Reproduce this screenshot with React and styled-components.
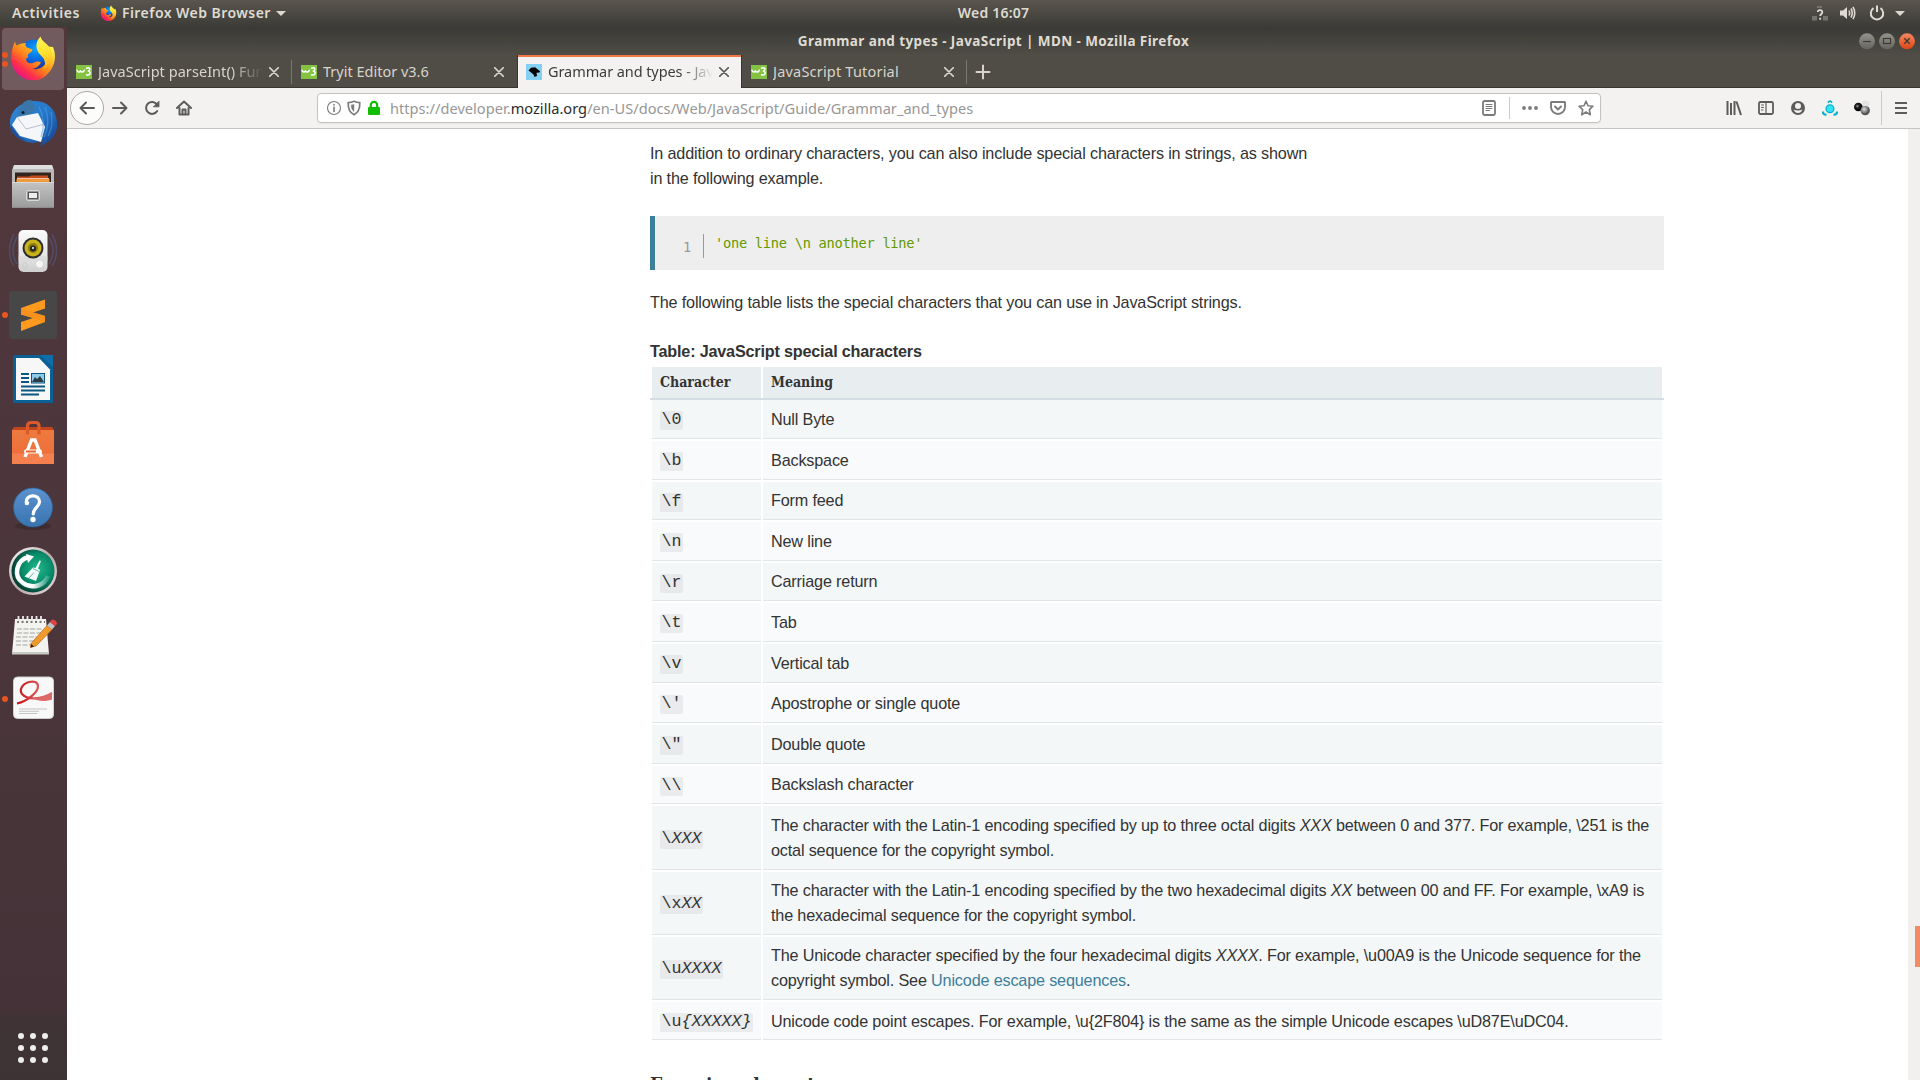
import React from "react";
import styled, { createGlobalStyle, css } from "styled-components";

const GlobalStyle = createGlobalStyle`
  * { box-sizing: border-box; }
  html, body { margin: 0; padding: 0; }
  body { width: 1920px; height: 1080px; overflow: hidden; background: #fff; }
`;

const uiFont = `"Noto Sans", "Open Sans", sans-serif`;
const slabFont = `"DejaVu Serif Condensed", "DejaVu Serif", serif`;

/* ---------- desktop shell ---------- */
const Desktop = styled.div`
  width: 1920px;
  height: 1080px;
  display: flex;
  flex-direction: column;
  overflow: hidden;
`;
const TopBar = styled.header`
  flex: 0 0 27px;
  display: grid;
  grid-template-columns: 1fr auto 1fr;
  align-items: center;
  padding: 0 15px 1px 12px;
  background: linear-gradient(#5a564e, #3c3b37);
  color: #dfdbd2;
  font: 600 14px/26px ${uiFont};
`;
const TopGroup = styled.div`
  display: flex;
  align-items: center;
  justify-content: ${(p) => (p.$end ? "flex-end" : "flex-start")};
`;
const Label = styled.span`
  letter-spacing: ${(p) => p.$ls || 0}px;
  margin-left: ${(p) => p.$ml || 0}px;
  margin-right: ${(p) => p.$mr || 0}px;
  white-space: pre;
`;
const Body = styled.div`
  flex: 1;
  display: flex;
  min-height: 0;
`;
const Dock = styled.nav`
  flex: 0 0 67px;
  display: flex;
  flex-direction: column;
  background: linear-gradient(#52383b, #4e373c 30%, #48353a 70%, #453238 93%, #3f3335 94.5%, #3e3334);
`;
const DockSlot = styled.div`
  position: relative;
  height: 64px;
  width: 67px;
  padding: 8px 0 0 9px;
  &::before {
    content: "";
    display: ${(p) => (p.$active ? "block" : "none")};
    position: absolute;
    left: 2px; top: 1px; width: 62px; height: 62px;
    border-radius: 4px;
    background: #715b5f;
  }
  svg { display: block; position: relative; }
`;
const RunDots = styled.div`
  position: absolute;
  left: 2px;
  top: 0;
  height: 64px;
  display: flex;
  flex-direction: column;
  justify-content: center;
  gap: 3px;
  i { width: 6px; height: 6px; border-radius: 50%; background: #e95420; }
`;
const AppsGrid = styled.div`
  margin: auto 0 17px 18px;
  display: grid;
  grid-template-columns: repeat(3, 6px);
  gap: 6px;
  i { width: 6px; height: 6px; border-radius: 50%; background: #eeeeec; }
`;

/* ---------- browser window ---------- */
const Window = styled.section`
  flex: 1;
  display: flex;
  flex-direction: column;
  min-width: 0;
`;
const TitleBar = styled.div`
  flex: 0 0 28px;
  display: grid;
  grid-template-columns: 1fr auto 1fr;
  align-items: center;
  padding: 0 5px;
  background: linear-gradient(#393936, #504d46);
  color: #dfdbd2;
  font: 700 13.5px/26px ${uiFont};
`;
const WinButtons = styled.div`
  grid-column: 3;
  display: flex;
  justify-content: flex-end;
  gap: 4px;
`;
const TabStrip = styled.div`
  flex: 0 0 33px;
  display: flex;
  background: #504d46;
  box-shadow: inset 0 -1px #38362f;
  color: #d8d4cb;
`;
const Tab = styled.div`
  width: 225px;
  height: 33px;
  display: flex;
  align-items: center;
  padding: 1px 13px 0 9px;
  font: 14.5px/29px ${uiFont};
  background: linear-gradient(#7b7872, #7b7872) right 0 top 5px / 1px 24px no-repeat;
  ${(p) => p.$plain && css`background: none;`}
  ${(p) => p.$active && css`
    padding: 1px 12px 0 8px;
    background: #f3f2f0;
    color: #3c3c3c;
    border: 1px solid #38362f;
    border-width: 0 1px;
    box-shadow: inset 0 2px #f07746;
  `}
`;
const TabText = styled.span`
  flex: 1;
  margin: 0 6px 0 6px;
  padding-bottom: 2px;
  overflow: hidden;
  white-space: nowrap;
  letter-spacing: ${(p) => p.$ls || 0}px;
  ${(p) => p.$fade && css`mask-image: linear-gradient(90deg, #000 calc(100% - 32px), transparent);`}
`;
const NewTab = styled.div`
  display: flex;
  align-items: center;
  padding-left: 8px;
`;
const Toolbar = styled.div`
  flex: 0 0 41px;
  display: flex;
  align-items: center;
  padding: 0 0 0 3px;
  background: #f3f2f0;
  border-bottom: 1px solid #c6c4c1;
`;
const BackButton = styled.div`
  width: 34px;
  height: 34px;
  border-radius: 50%;
  border: 1px solid #a9a8a6;
  background: #fcfcfb;
  display: grid;
  place-items: center;
`;
const NavIcons = styled.div`
  display: flex;
  gap: 16px;
  margin-left: 8px;
`;
const UrlBar = styled.div`
  margin-left: 125px;
  width: 1284px;
  height: 30px;
  display: flex;
  align-items: center;
  padding: 0 6px 0 8px;
  border: 1px solid #c4c2bf;
  border-radius: 4px;
  background: #fff;
  box-shadow: 0 1px 2px rgba(0, 0, 0, 0.06);
`;
const UrlIcons = styled.div`
  display: flex;
  gap: 4px;
`;
const UrlText = styled.span`
  margin-left: 8px;
  padding-top: 1px;
  flex: 1;
  color: #979797;
  font: 14.6px/27px ${uiFont};
  letter-spacing: 0.02px;
  b { font-weight: 400; color: #2b2b2b; }
`;
const UrlTools = styled.div`
  display: flex;
  align-items: center;
`;
const Divider = styled.i`
  width: 1px;
  height: ${(p) => p.$h}px;
  margin: 0 ${(p) => p.$mr}px 0 ${(p) => p.$ml}px;
  background: #cccac7;
`;
const ChromeTools = styled.div`
  display: flex;
  align-items: center;
  gap: 16px;
  margin-left: 125px;
`;

/* ---------- document ---------- */
const Page = styled.div`
  flex: 1;
  display: flex;
  min-height: 0;
  background: #fff;
`;
const Scrollbar = styled.div`
  flex: 0 0 12px;
  padding: 797px 0 0 7px;
  background: #f1f0ef;
`;
const Thumb = styled.div`
  height: 41px;
  background: #f08b65;
`;
const Article = styled.main`
  flex: 1;
  padding: 12px 0 0 583px;
  overflow: hidden;
  color: #333;
  font: 16.2px/25px "Liberation Sans", Arial, sans-serif;
  letter-spacing: -0.167px;
`;
const Para = styled.p`
  margin: 0 0 ${(p) => p.$mb}px;
  white-space: nowrap;
`;
const CodeBlock = styled.pre`
  margin: 0 0 20px;
  width: 1014px;
  height: 54px;
  display: flex;
  align-items: flex-start;
  padding: 18px 0 0 28px;
  background: #eee;
  border-left: 5px solid #3d7e9a;
  font: 13.7px/18px "DejaVu Sans Mono", monospace;
  letter-spacing: -0.27px;
  color: #690;
`;
const LineNo = styled.span`
  width: 21px;
  height: 24px;
  padding-top: 4px;
  border-right: 1px solid #999;
  color: #999;
`;
const CodeText = styled.code`
  margin-left: 11px;
  font: inherit;
`;
const Caption = styled.div`
  margin-bottom: 3px;
  font-weight: 700;
  letter-spacing: -0.19px;
`;
const TableHead = styled.div`
  width: 1014px;
  height: 33px;
  display: flex;
  gap: 2px;
  padding: 0 2px;
  border-bottom: 2px solid #d4dde4;
  font: 700 14px/31px ${slabFont};
  letter-spacing: 0;
`;
const HeadCell = styled.div`
  width: ${(p) => (p.$wide ? 899 : 109)}px;
  padding-left: 8px;
  background: #e8edf0;
`;
const Rows = styled.div`
  display: flex;
  flex-direction: column;
  gap: 2px;
  padding: 0.4px 2px 0;
`;
const Row = styled.div`
  display: flex;
  gap: 2px;
  height: ${(p) => (p.$two ? 63.2 : 38.6)}px;
`;
const Cell = styled.div`
  width: ${(p) => (p.$wide ? 899 : 109)}px;
  display: flex;
  align-items: center;
  padding: 0.8px 8px 0;
  background: ${(p) => (p.$odd ? "#f3f7f8" : "#f9fafc")};
  border-bottom: 1px solid #dfe5e9;
  white-space: nowrap;
`;
const Chip = styled.code`
  height: 19px;
  margin-top: 2.5px;
  padding: 0 1.5px;
  border-radius: 2px;
  background: rgba(220, 220, 220, 0.5);
  font: 16.667px/17px "Liberation Mono", monospace;
  letter-spacing: 0;
`;
const Link = styled.a`
  color: #3d7e9a;
`;
const Heading = styled.h3`
  margin: 29px 0 0;
  font: 700 19px/30px ${slabFont};
  letter-spacing: 0;
`;

/* ---------- icons ---------- */
const FirefoxLogo = ({ size, id }) => (
  <svg width={size} height={size} viewBox="0 0 48 48">
    <defs>
      <linearGradient id={id + "a"} x1="0.85" y1="0.1" x2="0.15" y2="0.9">
        <stop offset="0" stopColor="#fff44f" /><stop offset=".3" stopColor="#ffb321" />
        <stop offset=".55" stopColor="#ff7a1e" /><stop offset=".78" stopColor="#ff2f4a" /><stop offset="1" stopColor="#e2128f" />
      </linearGradient>
      <radialGradient id={id + "b"} cx=".55" cy=".3" r=".7">
        <stop offset="0" stopColor="#0aa5ff" /><stop offset=".6" stopColor="#0a5fd8" /><stop offset="1" stopColor="#24277c" />
      </radialGradient>
      <linearGradient id={id + "c"} x1=".4" y1="0" x2=".5" y2="1">
        <stop offset="0" stopColor="#fff75a" /><stop offset=".5" stopColor="#ffe12e" /><stop offset="1" stopColor="#ffa51c" />
      </linearGradient>
    </defs>
    <circle cx="25" cy="20" r="15.5" fill={`url(#${id}b)`} />
    <path d="M6 6.500C6.500 9 7 10 8 10.500C10 9 13 8 17 8C16 10 16.500 11 18 12.500L23.500 14.500C23.500 17 20.500 17.500 19 19.500C18.500 21.500 20 22.500 17 23.500C17 28 21 29 24 28C27.500 26 30 26 32 27.500C30 31 27 34 23 33.500C28 36 37 32 38.500 24C39 17 34 15 32 11L44 12C49 24 44 36 34.500 42.500C24 49 8 44 3.500 31C1 22 3 12 6 6.500Z" fill={`url(#${id}a)`} />
    <path d="M31.500 1.500C26 7 26 15 32 20.500C37 25 37 31 34 35C41 30 43 23 42 15C39 8 32.500 7 31.500 1.500Z" fill={`url(#${id}c)`} />
  </svg>
);

const Thunderbird = () => (
  <svg width="48" height="48" viewBox="0 0 48 48">
    <defs>
      <linearGradient id="tb" x1="0" y1="0" x2="1" y2="1"><stop offset="0" stopColor="#2f86d4" /><stop offset=".5" stopColor="#2678ca" /><stop offset="1" stopColor="#133d8d" /></linearGradient>
    </defs>
    <path d="M1 27C0 12 10 4 24 2C38 1 47 10 48 23C49 33 44 42 31 47L34 42L24 44C12 43 3 36 1 27Z" fill="url(#tb)" />
    <path d="M10 12C12 3 19-1 24 2L21 3C27 6 27 10 24 13C19 18 14 15 9 21Z" fill="#3a76a8" />
    <path d="M3 26L8 18L29 14L36 28L32 43L11 37Z" fill="#f4f6f9" />
    <path d="M8 18L17 30L34 25.500" fill="none" stroke="#b9bec8" strokeWidth="1" />
    <path d="M30 8C34 16 36 27 32 38M36 8C40 18 40 28 35 38M42 13C44 22 43 30 39 37" fill="none" stroke="#4fa6e4" strokeWidth="1.400" opacity=".5" />
    <path d="M1 25C2 35 9 41 18 42L10 37Z" fill="#1c4fa0" />
    <circle cx="14" cy="13.500" r="1.600" fill="#0c1e3c" />
  </svg>
);

const Files = () => (
  <svg width="48" height="48" viewBox="0 0 48 48">
    <defs><linearGradient id="fl" x1="0" y1="0" x2="0" y2="1"><stop offset="0" stopColor="#c4c4c4" /><stop offset="1" stopColor="#9b9b9b" /></linearGradient></defs>
    <path d="M5 2H43L45 7V44.500H3V7Z" fill="#b9b9b9" />
    <path d="M5 2H43L44 6H4Z" fill="#dedede" />
    <rect x="6" y="9.500" width="36" height="11" fill="#33241e" />
    <path d="M8 13.500H20L22 12.500H39V20H8Z" fill="#c64c1c" />
    <path d="M7.500 16H40.500V21H7.500Z" fill="#f19a3c" /><path d="M8 15.500H40" stroke="#f7e3d0" strokeWidth=".8" />
    <rect x="3" y="19" width="42" height="25.500" rx="1" fill="url(#fl)" />
    <path d="M3 19.500H45" stroke="#d8d8d8" />
    <rect x="17.500" y="27.500" width="13" height="10" rx="1.500" fill="#999" stroke="#d8d8d8" />
    <rect x="19.500" y="29.500" width="9" height="6" fill="#eee" stroke="#555" />
  </svg>
);

const Speaker = () => (
  <svg width="48" height="48" viewBox="0 0 48 48">
    <defs><linearGradient id="sp" x1="0" y1="0" x2="0" y2="1"><stop offset="0" stopColor="#fafafa" /><stop offset=".6" stopColor="#e6e6e6" /><stop offset="1" stopColor="#cfcfcf" /></linearGradient></defs>
    <path d="M5 7C-1 17-1 31 5 39M8 10C3 19 3 29 8 37M43 7C49 17 49 31 43 39M40 10C45 19 45 29 40 37" fill="none" stroke="#56618f" strokeWidth="1.600" opacity=".5" />
    <rect x="9.500" y="3" width="29" height="42" rx="5" fill="url(#sp)" />
    <path d="M9.500 29H38.500V34H9.500Z" fill="#d9d9d9" opacity=".6" />
    <circle cx="24" cy="21" r="10.500" fill="#2c2c30" />
    <circle cx="24" cy="21" r="8.500" fill="#c9b21a" />
    <circle cx="24" cy="21" r="5" fill="#8d7c10" />
    <circle cx="24" cy="21.500" r="3" fill="#222" /><circle cx="24" cy="21" r="1.200" fill="#c8c8d0" />
    <circle cx="30.500" cy="37" r="4" fill="#f6f6f6" stroke="#ccc" strokeWidth=".7" />
    <rect x="14" y="36" width="4" height="5" rx="1" fill="none" stroke="#ccc" />
  </svg>
);

const Sublime = () => (
  <svg width="48" height="48" viewBox="0 0 48 48">
    <rect width="48" height="48" rx="3" fill="#474747" />
    <path d="M12 17L36 8.500V17.500L24 21.500L36 25V31L12 40V31L24 27L12 23.500Z" fill="#ff9a1f" />
    <path d="M12 23.500V17.500L36 25V31L24 27Z" fill="#f5911c" />
  </svg>
);

const Writer = () => (
  <svg width="48" height="48" viewBox="0 0 48 48">
    <path d="M6 0H32L44 12V48H4V2Q4 0 6 0Z" fill="#0a5f95" />
    <path d="M7 3H30L41 14.500V45H7Z" fill="#f7f7f7" />
    <path d="M31 0H44V12Z" fill="#0d6eac" />
    <g stroke="#0a5680" strokeWidth="1.800"><path d="M12 19H20M12 23H20M12 27H20M12 31.500H36M12 35.500H36M12 39.500H30" /></g>
    <rect x="22.500" y="18.500" width="13" height="9.500" fill="#8ecaea" stroke="#0a5680" />
    <path d="M23 27L26 22L28 24L31 21L35 27Z" fill="#2d3c44" />
  </svg>
);

const Software = () => (
  <svg width="48" height="48" viewBox="0 0 48 48">
    <defs><linearGradient id="sw" x1="0" y1="0" x2="0" y2="1"><stop offset="0" stopColor="#ec7b3e" /><stop offset="1" stopColor="#f0693a" /></linearGradient></defs>
    <path d="M3 11L5 8H43L45 11Z" fill="#c4441c" />
    <rect x="3" y="11" width="42" height="34" fill="url(#sw)" />
    <rect x="3" y="34.500" width="42" height="10.500" fill="#f5804f" />
    <path d="M18.500 15.500V7Q18.500 3.500 22 3.500H26.500Q30 3.500 30 7V15.500" fill="none" stroke="#dc5a2a" strokeWidth="3.200" />
    <path d="M16 38L22.500 21H26L32.500 38" fill="none" stroke="#fff" strokeWidth="3.400" />
    <rect x="15" y="30.500" width="18" height="4" rx="2" fill="#fff" />
    <rect x="17" y="31.500" width="10" height="2" fill="#e8642f" />
  </svg>
);

const Help = () => (
  <svg width="48" height="48" viewBox="0 0 48 48">
    <defs><linearGradient id="hp" x1="0" y1="0" x2="0" y2="1"><stop offset="0" stopColor="#5b93cf" /><stop offset="1" stopColor="#3873b0" /></linearGradient></defs>
    <ellipse cx="24" cy="43" rx="18" ry="4" fill="#000" opacity=".18" />
    <circle cx="24" cy="24.500" r="19.500" fill="url(#hp)" stroke="#2f6399" strokeWidth=".8" />
    <path d="M17.500 20.500C15.500 10.500 31 10.500 30.500 19C30 24.500 24.500 24.500 24.200 31" fill="none" stroke="#fff" strokeWidth="3.200" strokeLinecap="round" />
    <circle cx="18" cy="20" r="2.200" fill="#fff" /><circle cx="24" cy="36.500" r="2.700" fill="#fff" />
  </svg>
);

const Cleaner = () => (
  <svg width="48" height="48" viewBox="0 0 48 48">
    <defs>
      <linearGradient id="cr" x1="0" y1="0" x2="1" y2="1"><stop offset="0" stopColor="#fff" /><stop offset=".5" stopColor="#b9a9a9" /><stop offset="1" stopColor="#e9dcdc" /></linearGradient>
      <radialGradient id="cg" cx=".6" cy=".45" r=".6"><stop offset="0" stopColor="#1fb88b" /><stop offset=".6" stopColor="#088a68" /><stop offset="1" stopColor="#05382f" /></radialGradient>
      <linearGradient id="ca" x1="0" y1="0" x2="1" y2="0"><stop offset=".5" stopColor="#fff" /><stop offset="1" stopColor="#fff" stopOpacity=".15" /></linearGradient>
    </defs>
    <circle cx="24" cy="24" r="24" fill="url(#cr)" /><circle cx="24" cy="24" r="21.500" fill="url(#cg)" />
    <path d="M20 10C7 13 4 29 14 36C24 43 36 38 39 29" fill="none" stroke="url(#ca)" strokeWidth="4.500" />
    <path d="M17 7L25 9.500L19 16Z" fill="#fff" />
    <path d="M30.500 13.500L32 14L29 21.500L31 23L27 34L15.500 29.500L24 20.500L26.500 21Z" fill="#f2fbf8" />
    <path d="M24 21.500L30 24.500M20 31L25 25.500" stroke="#0b8a69" strokeWidth=".6" />
  </svg>
);

const Notes = () => (
  <svg width="48" height="48" viewBox="0 0 48 48">
    <path d="M6 8H37L40 43H3Z" fill="#f3f3ef" /><path d="M3 41H40V43.500H3Z" fill="#c9c9c4" />
    <g stroke="#e9e9e9" strokeWidth="1.800"><path d="M9.500 5V11M14 5V11M18.500 5V11M23 5V11M27.500 5V11M32 5V11" /></g>
    <path d="M8 11H36" stroke="#55534f" strokeWidth="1.500" strokeDasharray="2 2.500" />
    <g stroke="#9c9c9c" strokeWidth=".9" strokeDasharray="5 1.500"><path d="M8 18H34M8 22H32M7 26H28M7 30H26M7 34H22" /></g>
    <path d="M22 32.500L38 14.500L43 18.500L27 35L21.500 36.500Z" fill="#f19a2c" stroke="#b7651a" strokeWidth=".7" />
    <path d="M38 14.500L41 11L46 15L43 18.500Z" fill="#bfc4c9" /><path d="M41 11L43 8.500Q48 9 48 13L46 15Z" fill="#e2443f" />
    <path d="M21.500 36.500L22.300 33L25 35.500Z" fill="#222" />
  </svg>
);

const PdfReader = () => (
  <svg width="48" height="48" viewBox="0 0 48 48">
    <defs><linearGradient id="pd" x1="0" y1="0" x2="1" y2="0"><stop offset="0" stopColor="#c8141a" /><stop offset="1" stopColor="#e08080" /></linearGradient></defs>
    <rect x="4.500" y="2" width="40" height="41.500" rx="4" fill="#f8f8f8" stroke="#cfcfcf" />
    <path d="M8 28.500C19 26 29 17 29 11.500C29 6.500 24.500 6 20 7C13 9 10 15 13 19C18 25 32 25 43 18" fill="none" stroke="url(#pd)" strokeWidth="2.200" />
    <path d="M21 22C29 24.500 37 22 43 17V24.500C36 27 28 26.500 21 22Z" fill="#dc6a6a" />
    <path d="M10 34H38M10 36.300H30M10 38.500H28" stroke="#c4c4c4" strokeWidth="1" />
  </svg>
);

const Stroke = ({ size = 16, w = 2, color = "#5b5b5a", children, cap = "round" }) => (
  <svg width={size} height={size} viewBox="0 0 16 16" fill="none" stroke={color} strokeWidth={w} strokeLinecap={cap} strokeLinejoin="round">
    {children}
  </svg>
);

const W3 = () => (
  <svg width="16" height="16" viewBox="0 0 16 16" fill="none" stroke="#fff" strokeWidth="1.500" strokeLinecap="round" strokeLinejoin="round">
    <rect y="1" width="16" height="14" fill="#83c341" stroke="none" />
    <path d="M1 6.200C1.500 8.600 3.500 8.600 4.400 6.800C5.300 8.600 7.300 8.600 8.300 6.200M10.500 4.200C13.800 2.800 15.300 5.800 12.300 7C15.500 7.800 14.200 12.200 10.500 10.800" />
  </svg>
);

const Mdn = () => (
  <svg width="16" height="16" viewBox="0 0 16 16">
    <rect width="16" height="16" fill="#83d0f2" />
    <path d="M2.500 6.500L5 3.800L9 3.200L14 7.200L13.500 8.500L10.500 8.800L11 12L8.500 13L7.500 10.500L4.500 8Z" fill="#000" />
  </svg>
);

const Close = ({ color }) => (
  <Stroke size={10} w={2.4} color={color}><path d="M1 1L15 15M15 1L1 15" /></Stroke>
);

const Caret = () => (
  <svg width="10" height="5" viewBox="0 0 10 5"><path d="M0 0H10L5 5Z" fill="#dcd9d0" /></svg>
);

const WinButton = ({ kind }) => (
  <svg width="16" height="17" viewBox="0 0 16 17">
    <defs>
      <linearGradient id={"wb" + kind} x1="0" y1="0" x2="0" y2="1">
        <stop offset="0" stopColor={kind === "close" ? "#f58763" : "#94928b"} />
        <stop offset="1" stopColor={kind === "close" ? "#dc4613" : "#66645e"} />
      </linearGradient>
    </defs>
    <circle cx="8" cy="8.300" r="8" fill={`url(#wb${kind})`} />
    <g fill="none" stroke="#3a3834" strokeWidth="1.100">
      {kind === "min" && <path d="M4 8.500H12" />}
      {kind === "max" && <rect x="4.500" y="5.500" width="7" height="5" />}
      {kind === "close" && <path d="M5.300 5.300L10.700 10.700M10.700 5.300L5.300 10.700" strokeWidth="1.300" />}
    </g>
  </svg>
);

/* ---------- data ---------- */
const rows = [
  ["\\0", "", "Null Byte"],
  ["\\b", "", "Backspace"],
  ["\\f", "", "Form feed"],
  ["\\n", "", "New line"],
  ["\\r", "", "Carriage return"],
  ["\\t", "", "Tab"],
  ["\\v", "", "Vertical tab"],
  ["\\'", "", "Apostrophe or single quote"],
  ['\\"', "", "Double quote"],
  ["\\\\", "", "Backslash character"],
  ["\\", "XXX", <>The character with the Latin-1 encoding specified by up to three octal digits <i>XXX</i> between 0 and 377. For example, \251 is the<br />octal sequence for the copyright symbol.</>, true],
  ["\\x", "XX", <>The character with the Latin-1 encoding specified by the two hexadecimal digits <i>XX</i> between 00 and FF. For example, \xA9 is<br />the hexadecimal sequence for the copyright symbol.</>, true],
  ["\\u", "XXXX", <>The Unicode character specified by the four hexadecimal digits <i>XXXX</i>. For example, \u00A9 is the Unicode sequence for the<br />copyright symbol. See <Link>Unicode escape sequences</Link>.</>, true],
  ["\\u", "{XXXXX}", "Unicode code point escapes. For example, \\u{2F804} is the same as the simple Unicode escapes \\uD87E\\uDC04."],
];

const dock = [
  [() => <FirefoxLogo size={48} id="dk" />, 2, true], [Thunderbird, 0], [Files, 0], [Speaker, 0], [Sublime, 1],
  [Writer, 0], [Software, 0], [Help, 0], [Cleaner, 0], [Notes, 0], [PdfReader, 1],
];

export default function App() {
  return (
    <Desktop>
      <GlobalStyle />
      <TopBar>
        <TopGroup>
          <Label $ls={0.55}>Activities</Label>
          <Label $ml={20} />
          <FirefoxLogo size={17} id="tp" />
          <Label $ml={5} $mr={5} $ls={0.45}>Firefox Web Browser</Label>
          <Caret />
        </TopGroup>
        <Label $ml={70} $ls={0.22}>Wed 16:07</Label>
        <TopGroup $end>
          <svg width="16" height="16" viewBox="0 0 16 16">
            <path d="M5 1H10V3H5ZM0 11H5V15.500H0ZM11 11H16V15.500H11Z" fill="#77746d" />
            <path d="M5.800 7C5.800 4.500 10.300 4.500 10.300 7.200C10.300 9 8.200 9 8.200 11M8.200 12.800V14.800" fill="none" stroke="#dfdbd2" strokeWidth="1.800" />
          </svg>
          <Label $ml={12} />
          <svg width="16" height="16" viewBox="0 0 16 16" fill="none" stroke="#dfdbd2" strokeWidth="1.600">
            <path d="M0 5.500H3L7 2V14L3 10.500H0Z" fill="#dfdbd2" stroke="none" />
            <path d="M9 5.500Q10.300 8 9 10.500M11 3.500Q13.500 8 11 12.500M13 1.800Q16.500 8 13 14.200" />
          </svg>
          <Label $ml={13} />
          <svg width="16" height="16" viewBox="0 0 16 16" fill="none" stroke="#dfdbd2" strokeWidth="2">
            <path d="M4.500 3.200A6.200 6.200 0 1 0 11.500 3.200M8 .5V7" />
          </svg>
          <Label $ml={10} />
          <Caret />
        </TopGroup>
      </TopBar>
      <Body>
        <Dock>
          {dock.map(([Icon, dots, active], i) => (
            <DockSlot key={i} $active={active}>
              <Icon />
              <RunDots>{Array.from({ length: dots }, (_, k) => <i key={k} />)}</RunDots>
            </DockSlot>
          ))}
          <AppsGrid>{Array.from({ length: 9 }, (_, k) => <i key={k} />)}</AppsGrid>
        </Dock>
        <Window>
          <TitleBar>
            <span />
            <Label $ls={0.41}>Grammar and types - JavaScript | MDN - Mozilla Firefox</Label>
            <WinButtons><WinButton kind="min" /><WinButton kind="max" /><WinButton kind="close" /></WinButtons>
          </TitleBar>
          <TabStrip>
            <Tab><W3 /><TabText $fade $ls={0.05}>JavaScript parseInt() Function</TabText><Close color="#d8d4cb" /></Tab>
            <Tab $plain><W3 /><TabText>Tryit Editor v3.6</TabText><Close color="#d8d4cb" /></Tab>
            <Tab $active><Mdn /><TabText $fade $ls={-0.08}>Grammar and types - JavaScript</TabText><Close color="#5b5b5a" /></Tab>
            <Tab><W3 /><TabText $ls={0.2}>JavaScript Tutorial</TabText><Close color="#d8d4cb" /></Tab>
            <NewTab><Stroke w={2} color="#d8d4cb"><path d="M8 1.500V14.500M1.500 8H14.500" /></Stroke></NewTab>
          </TabStrip>
          <Toolbar>
            <BackButton><Stroke><path d="M15 8H1.500M7 2.500L1.500 8L7 13.500" /></Stroke></BackButton>
            <NavIcons>
              <Stroke><path d="M1 8H14.500M9 2.500L14.500 8L9 13.500" /></Stroke>
              <Stroke><path d="M13.200 11A6 6 0 1 1 13 4.500" /><path d="M15 1.500V6.800H9.700Z" fill="#5b5b5a" strokeWidth=".8" /></Stroke>
              <Stroke><path d="M1 8L8 1.500L15 8M3.500 8V14.500H12.500V8" /><path d="M6.500 14V9.500H9.500V14" /></Stroke>
            </NavIcons>
            <UrlBar>
              <UrlIcons>
                <Stroke w={1.1} color="#7b7b7b"><circle cx="8" cy="8" r="6.500" /><path d="M8 7.300V11.500M8 4.500V5" strokeWidth="1.600" /></Stroke>
                <Stroke w={1.7} color="#7b7b7b"><path d="M8 1.300C10 2.300 12 2.600 13.800 2.600C14 9 12.500 12.500 8 14.800C3.500 12.500 2 9 2.200 2.600C4 2.600 6 2.300 8 1.300Z" /><path d="M8 4.500V11.500C6 10 5.200 8 5.200 5.200Z" fill="#7b7b7b" strokeWidth=".4" /></Stroke>
                <svg width="16" height="16" viewBox="0 0 16 16"><rect x="2" y="7" width="12" height="8" rx="1" fill="#12bc00" /><path d="M4.800 8V5A3.200 3.200 0 0 1 11.200 5V8" fill="none" stroke="#12bc00" strokeWidth="2.200" /></svg>
              </UrlIcons>
              <UrlText><span>https://developer.<b>mozilla.org</b>/en-US/docs/Web/JavaScript/Guide/Grammar_and_types</span></UrlText>
              <UrlTools>
                <Stroke w={1.8} color="#7b7b7b"><rect x="2" y="1" width="12" height="14" rx="1.500" /><path d="M5 4.500H11M5 6.500H11M5 8.500H11M5 10.500H8.500" strokeWidth="1" /></Stroke>
                <Divider $h={22} $ml={12} $mr={12} />
                <svg width="16" height="16" viewBox="0 0 16 16" fill="#7b7b7b"><circle cx="2" cy="8" r="1.900" /><circle cx="8" cy="8" r="1.900" /><circle cx="14" cy="8" r="1.900" /></svg>
                <Label $ml={12} />
                <Stroke w={1.9} color="#7b7b7b"><path d="M1.500 2H14.500Q15 2 15 2.500V7A7 7 0 0 1 1 7V2.500Q1 2 1.500 2Z" /><path d="M5 6.500L8 9.500L11 6.500" /></Stroke>
                <Label $ml={12} />
                <Stroke w={1.6} color="#7b7b7b"><path d="M8 1.200L10 5.700L15 6.200L11.300 9.600L12.300 14.700L8 12L3.700 14.700L4.700 9.600L1 6.200L6 5.700Z" /></Stroke>
              </UrlTools>
            </UrlBar>
            <ChromeTools>
              <Stroke cap="butt"><path d="M1.500 1V15M5 3V15M8.500 1V15M10.500 1.500L15 15" /></Stroke>
              <Stroke w={1.8}><rect x="1" y="2" width="14" height="12" rx="1.500" /><path d="M8 2V14" strokeWidth="1.200" /><path d="M3.500 5H5.500M3.500 7.500H5.500M3.500 10H5" strokeWidth="1" /></Stroke>
              <svg width="16" height="16" viewBox="0 0 16 16"><circle cx="8" cy="8" r="7" fill="#5b5b5a" /><circle cx="8" cy="6" r="3" fill="#f3f2f0" /><path d="M3.500 9.500Q8 11.500 12.500 9.500Q11 13 8 13Q5 13 3.500 9.500Z" fill="#f3f2f0" /></svg>
              <svg width="16" height="16" viewBox="0 0 16 16" fill="none" stroke="#06b0c8" strokeWidth="1.800">
                <circle cx="8" cy="8.800" r="3.900" fill="#35e4f2" strokeWidth="1.300" /><path d="M6 2.800Q8-.6 10 2.800" /><path d="M1 11.500Q.8 15 4.500 14.700M15 11.500Q15.200 15 11.500 14.700" strokeWidth="2.200" />
              </svg>
              <svg width="16" height="16" viewBox="0 0 16 16">
                <defs>
                  <radialGradient id="bk" cx=".4" cy=".4"><stop offset="0" stopColor="#aaa" /><stop offset=".4" stopColor="#222" /><stop offset="1" stopColor="#000" /></radialGradient>
                  <radialGradient id="gy" cx=".4" cy=".35"><stop offset="0" stopColor="#ddd" /><stop offset="1" stopColor="#555" /></radialGradient>
                </defs>
                <circle cx="11.500" cy="4.500" r="4" fill="#e4e4e4" /><circle cx="4.300" cy="7" r="4.300" fill="url(#bk)" /><circle cx="11.200" cy="10.600" r="4.700" fill="url(#gy)" />
              </svg>
            </ChromeTools>
            <Divider $h={34} $ml={11} $mr={11} />
            <Stroke cap="butt"><path d="M2 3H14M2 8H14M2 13H14" /></Stroke>
          </Toolbar>
          <Page>
            <Article>
              <Para $mb={25}>In addition to ordinary characters, you can also include special characters in strings, as shown<br />in the following example.</Para>
              <CodeBlock><LineNo>1</LineNo><CodeText>'one line \n another line'</CodeText></CodeBlock>
              <Para $mb={24}>The following table lists the special characters that you can use in JavaScript strings.</Para>
              <Caption>Table: JavaScript special characters</Caption>
              <TableHead><HeadCell>Character</HeadCell><HeadCell $wide>Meaning</HeadCell></TableHead>
              <Rows>
                {rows.map(([code, arg, text, two], i) => (
                  <Row key={i} $two={two}>
                    <Cell $odd={i % 2 === 0 || two}><Chip>{code}{arg && <i>{arg}</i>}</Chip></Cell>
                    <Cell $wide $odd={i % 2 === 0 || two}><span>{text}</span></Cell>
                  </Row>
                ))}
              </Rows>
              <Heading>Escaping characters</Heading>
            </Article>
            <Scrollbar><Thumb /></Scrollbar>
          </Page>
        </Window>
      </Body>
    </Desktop>
  );
}
